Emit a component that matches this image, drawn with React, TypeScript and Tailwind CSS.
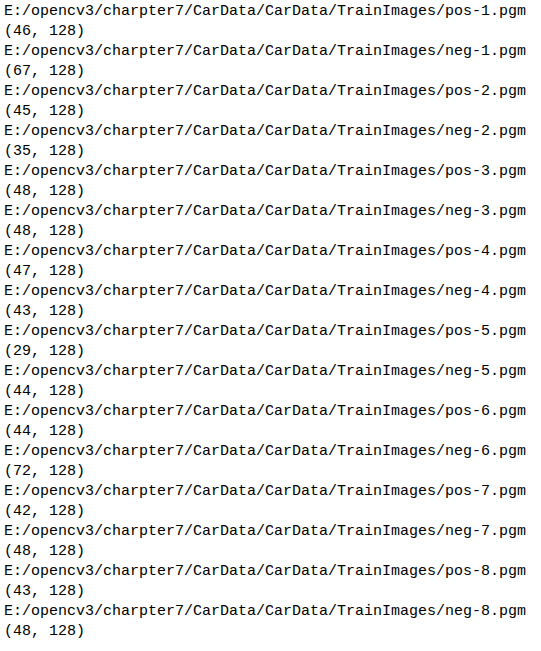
import React from "react";

const pairs: [string, string][] = [
  ["pos-1", "(46, 128)"],
  ["neg-1", "(67, 128)"],
  ["pos-2", "(45, 128)"],
  ["neg-2", "(35, 128)"],
  ["pos-3", "(48, 128)"],
  ["neg-3", "(48, 128)"],
  ["pos-4", "(47, 128)"],
  ["neg-4", "(43, 128)"],
  ["pos-5", "(29, 128)"],
  ["neg-5", "(44, 128)"],
  ["pos-6", "(44, 128)"],
  ["neg-6", "(72, 128)"],
  ["pos-7", "(42, 128)"],
  ["neg-7", "(48, 128)"],
  ["pos-8", "(43, 128)"],
  ["neg-8", "(48, 128)"],
];

export default function App() {
  return (
    <div className="w-[541px] h-[651px] bg-white pt-[2px] pl-[4px] text-black font-['Liberation_Mono',monospace] text-[15px] leading-[20px] whitespace-pre overflow-hidden">
      {pairs.map(([name, shape]) => (
        <React.Fragment key={name}>
          <div>{`E:/opencv3/charpter7/CarData/CarData/TrainImages/${name}.pgm`}</div>
          <div>{shape}</div>
        </React.Fragment>
      ))}
    </div>
  );
}
